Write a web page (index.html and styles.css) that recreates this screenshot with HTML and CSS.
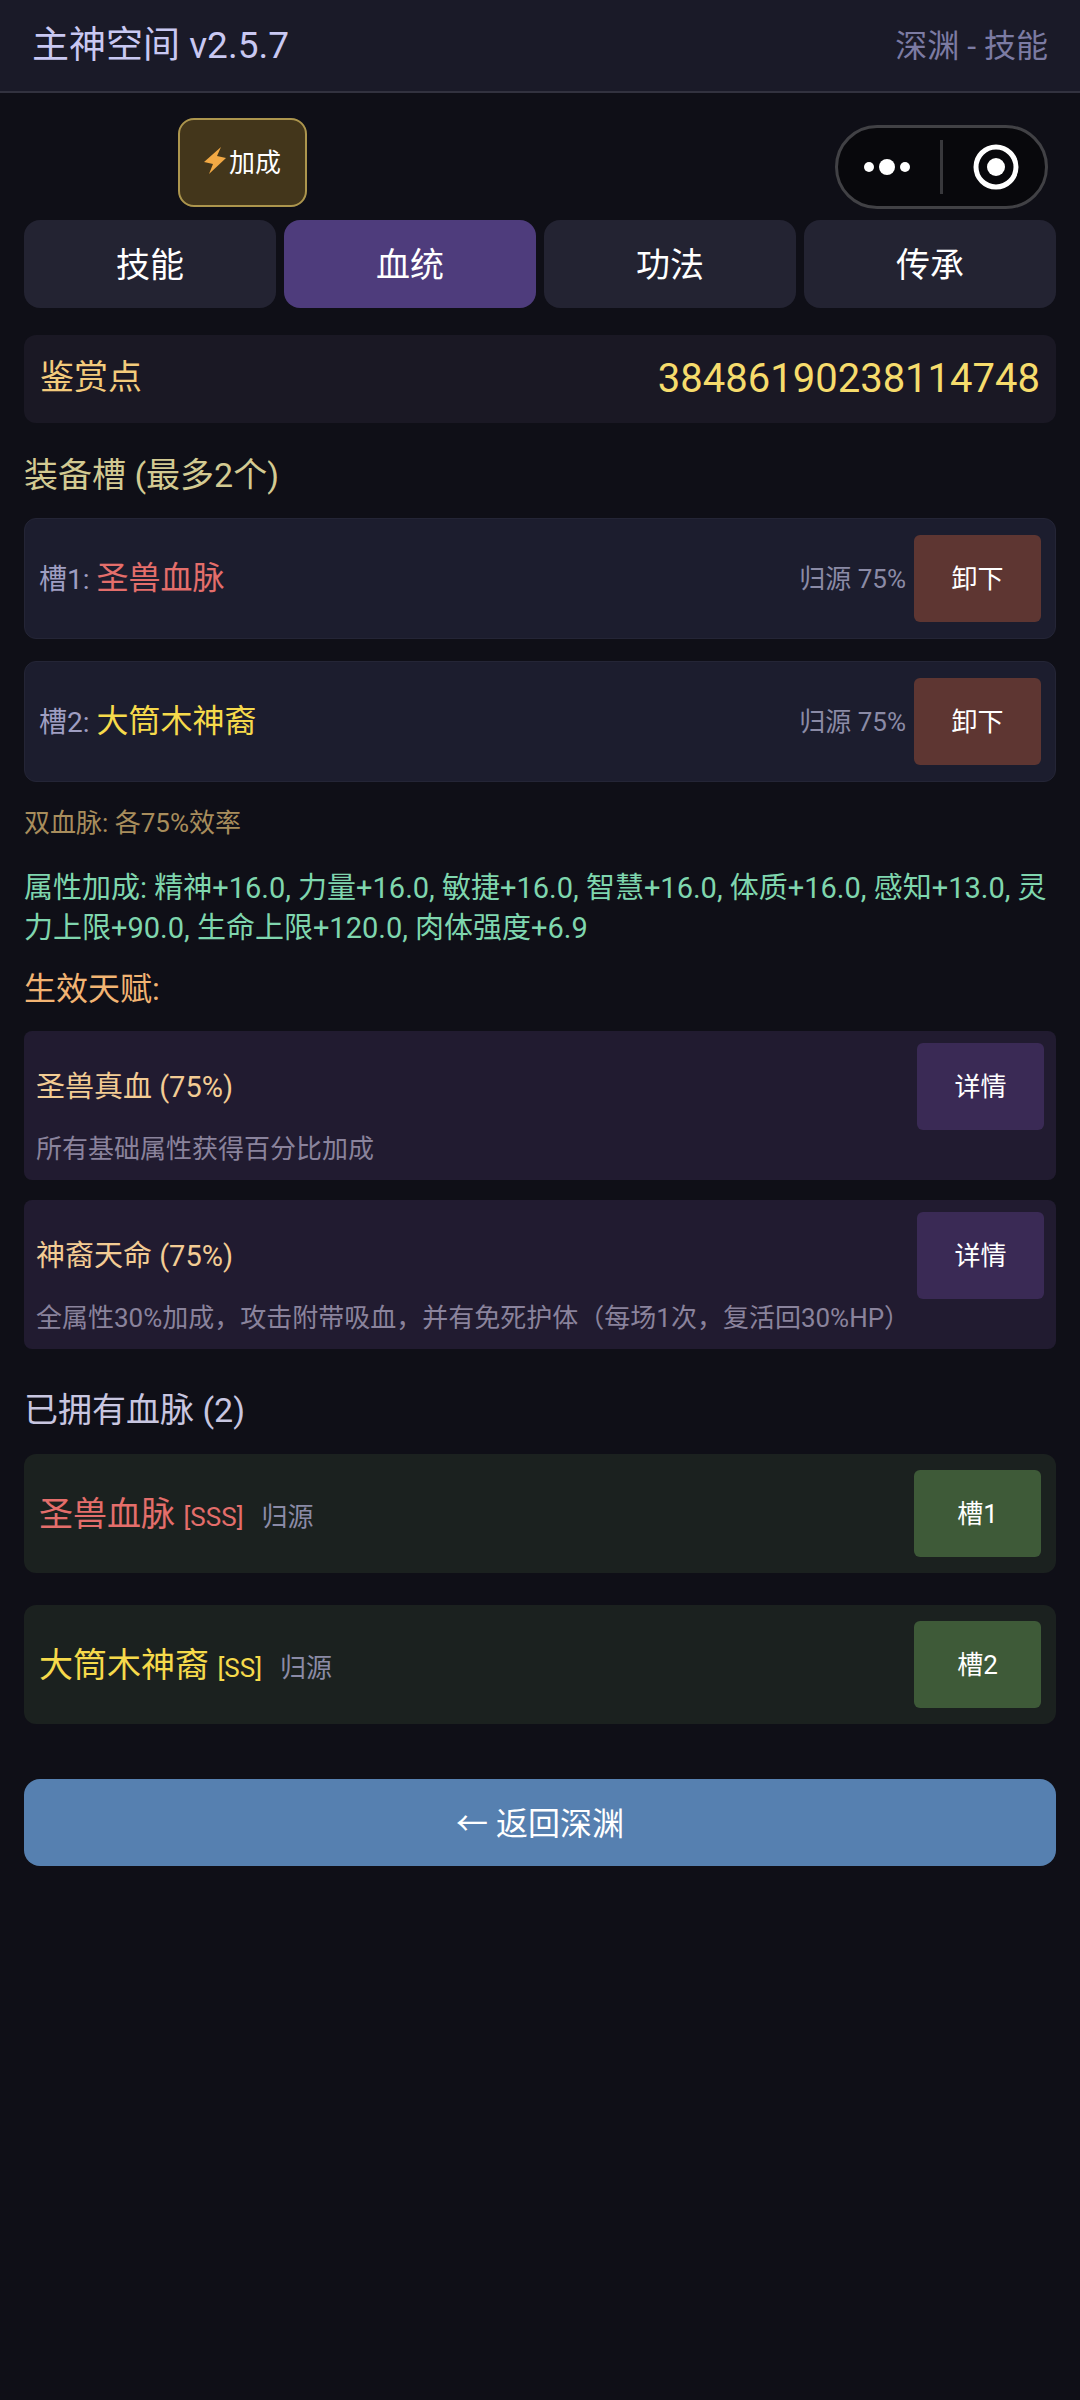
FILE: index.html
```html
<!DOCTYPE html>
<html lang="zh-CN">
<head>
    <meta charset="UTF-8">
    <meta name="viewport" content="width=device-width, initial-scale=1.0">
    <title>主神空间</title>
    <link rel="stylesheet" href="styles.css">
</head>
<body>
    <header class="header">
        <h1 class="title">主神空间 v2.5.7</h1>
        <span class="location">深渊 - 技能</span>
    </header>

    <div class="toolbar">
        <button class="bonus-button">
            <svg class="bolt" viewBox="0 0 22 27" aria-hidden="true">
                <path d="M17 0L0 15l9 2-4 10L22 11l-9-2z" fill="#f2a944"/>
            </svg>加成
        </button>
        <div class="capsule">
            <button class="capsule-button more" aria-label="更多">
                <svg class="dots" viewBox="0 0 46 46" aria-hidden="true">
                    <circle cx="5" cy="23" r="5" fill="#fff"/>
                    <circle cx="23" cy="23" r="8" fill="#fff"/>
                    <circle cx="41" cy="23" r="5" fill="#fff"/>
                </svg>
            </button>
            <button class="capsule-button close" aria-label="关闭">
                <svg class="ring" viewBox="0 0 46 46" aria-hidden="true">
                    <circle cx="23" cy="23" r="20" fill="none" stroke="#fff" stroke-width="5"/>
                    <circle cx="23" cy="23" r="9" fill="#fff"/>
                </svg>
            </button>
        </div>
    </div>

    <main class="content">
        <nav class="tabs">
            <button class="tab">技能</button>
            <button class="tab active">血统</button>
            <button class="tab">功法</button>
            <button class="tab">传承</button>
        </nav>

        <div class="points">
            <span class="points-label">鉴赏点</span>
            <span class="points-value">38486190238114748</span>
        </div>

        <h2 class="section-title slots-title">装备槽 (最多2个)</h2>
        <div class="slots">
            <div class="slot">
                <div class="slot-name">槽1: <span class="name red">圣兽血脉</span></div>
                <span class="stage">归源 75%</span>
                <button class="small-button remove">卸下</button>
            </div>
            <div class="slot">
                <div class="slot-name">槽2: <span class="name yellow">大筒木神裔</span></div>
                <span class="stage">归源 75%</span>
                <button class="small-button remove">卸下</button>
            </div>
        </div>
        <p class="note">双血脉: 各75%效率</p>
        <p class="stats">属性加成: 精神+16.0, 力量+16.0, 敏捷+16.0, 智慧+16.0, 体质+16.0, 感知+13.0, 灵力上限+90.0, 生命上限+120.0, 肉体强度+6.9</p>

        <h3 class="talent-title">生效天赋:</h3>
        <div class="talents">
            <div class="talent">
                <div class="talent-row">
                    <span class="talent-name">圣兽真血 (75%)</span>
                    <button class="small-button detail">详情</button>
                </div>
                <p class="talent-desc">所有基础属性获得百分比加成</p>
            </div>
            <div class="talent">
                <div class="talent-row">
                    <span class="talent-name">神裔天命 (75%)</span>
                    <button class="small-button detail">详情</button>
                </div>
                <p class="talent-desc">全属性30%加成，攻击附带吸血，并有免死护体（每场1次，复活回30%HP）</p>
            </div>
        </div>

        <h2 class="section-title owned-title">已拥有血脉 (2)</h2>
        <div class="owned-list">
            <div class="owned">
                <div class="owned-name red">圣兽血脉 <span class="rank">[SSS]</span><span class="stage">归源</span></div>
                <button class="small-button equip">槽1</button>
            </div>
            <div class="owned">
                <div class="owned-name yellow">大筒木神裔 <span class="rank">[SS]</span><span class="stage">归源</span></div>
                <button class="small-button equip">槽2</button>
            </div>
        </div>

        <button class="back-button">← 返回深渊</button>
    </main>
</body>
</html>
```

FILE: styles.css
```css
* {
    box-sizing: border-box;
}
body {
    margin: 0;
    min-height: 100vh;
    background-color: #0f0f17;
    color: #fff;
    font-family: Roboto, "Noto Sans CJK SC", sans-serif;
    font-size: 26px;
    line-height: 36px;
}
h1, h2, h3, p {
    margin: 0;
    font-weight: normal;
}
button {
    border: none;
    padding: 0 0 4px;
    color: #fff;
    font-family: inherit;
    font-size: 26px;
    cursor: pointer;
}

/* header */
.header {
    display: flex;
    justify-content: space-between;
    align-items: center;
    height: 93px;
    padding: 0 32px;
    background-color: #1a1a28;
    border-bottom: 2px solid #32323f;
}
.title {
    font-size: 37px;
    color: #c9c8f2;
}
.location {
    font-size: 32px;
    color: #7c7ba3;
}

/* floating buttons row */
.toolbar {
    display: flex;
    justify-content: space-between;
    align-items: flex-start;
    padding: 25px 32px 11px 178px;
}
.bonus-button {
    display: flex;
    justify-content: center;
    align-items: center;
    gap: 3px;
    width: 129px;
    height: 89px;
    background-color: #43361b;
    border: 2px solid #ac954d;
    border-radius: 16px;
}
.bolt {
    width: 22px;
    height: 27px;
}
.capsule {
    display: flex;
    align-items: center;
    width: 213px;
    height: 84px;
    margin-top: 7px;
    background-color: #08080c;
    border: 3px solid #414145;
    border-radius: 42px;
}
.capsule-button {
    display: flex;
    justify-content: center;
    align-items: center;
    flex: 1;
    height: 54px;
    background: none;
}
.capsule-button.more {
    padding: 0 4px 0 0;
}
.capsule-button.close {
    padding: 0 0 0 4px;
    border-left: 3px solid #38383c;
}
.dots, .ring {
    width: 46px;
    height: 46px;
}

.content {
    padding: 0 24px 24px;
}

/* tabs */
.tabs {
    display: grid;
    grid-template-columns: repeat(4, 1fr);
    gap: 8px;
}
.tab {
    height: 88px;
    font-size: 34px;
    background-color: #232332;
    border-radius: 16px;
}
.tab.active {
    background-color: #4e3c7c;
}

.points {
    display: flex;
    justify-content: space-between;
    align-items: center;
    height: 88px;
    margin-top: 27px;
    padding: 0 16px;
    background-color: #1a1824;
    border-radius: 12px;
}
.points-label {
    padding-bottom: 4px;
    font-size: 34px;
    color: #f3cb7c;
}
.points-value {
    font-size: 40px;
    color: #f6dc6c;
}

.section-title {
    font-size: 34px;
    line-height: 50px;
}
.slots-title {
    margin: 27px 0 18px;
    color: #d3ca92;
}
.owned-title {
    margin: 36px 0 19px;
    color: #c8c6e0;
}

.red {
    color: #e46e6b;
}
.yellow {
    color: #f6da4b;
}
.stage {
    font-size: 26px;
    color: #8b8ba6;
}

.small-button {
    width: 127px;
    height: 87px;
    border-radius: 6px;
}
.remove {
    background-color: #5e3632;
}
.detail {
    background-color: #3a2a55;
}
.equip {
    background-color: #3e5a38;
}

/* equipment slots */
.slots {
    display: flex;
    flex-direction: column;
    gap: 22px;
}
.slot {
    display: flex;
    align-items: center;
    gap: 8px;
    padding: 16px 14px;
    background-color: #1c1d2e;
    border: 1px solid #242536;
    border-radius: 12px;
}
.slot-name {
    flex: 1;
    font-size: 28px;
    color: #9f9ec2;
}
.name {
    font-size: 32px;
}

.note {
    margin-top: 23px;
    color: #a88d5c;
}
.stats {
    margin-top: 27px;
    font-size: 29px;
    line-height: 40px;
    color: #7fd6ae;
}

/* talents */
.talent-title {
    margin: 19px 0 20px;
    font-size: 32px;
    line-height: 44px;
    color: #f2b473;
}
.talents {
    display: flex;
    flex-direction: column;
    gap: 20px;
}
.talent {
    padding: 12px;
    background-color: #211b30;
    border-radius: 8px;
}
.talent-row {
    display: flex;
    justify-content: space-between;
    align-items: center;
}
.talent-name {
    font-size: 29px;
    color: #f3cc94;
}
.talent-desc {
    line-height: 38px;
    color: #8a839c;
}

/* owned bloodlines */
.owned-list {
    display: flex;
    flex-direction: column;
    gap: 32px;
}
.owned {
    display: flex;
    justify-content: space-between;
    align-items: center;
    padding: 16px 15px;
    background-color: #1b211f;
    border-radius: 12px;
}
.owned-name {
    padding-top: 4px;
    font-size: 34px;
}
.rank {
    margin-right: 18px;
    font-size: 26px;
}

.back-button {
    display: block;
    width: 100%;
    height: 87px;
    margin-top: 55px;
    font-size: 32px;
    background-color: #5680b0;
    border-radius: 16px;
}
```
